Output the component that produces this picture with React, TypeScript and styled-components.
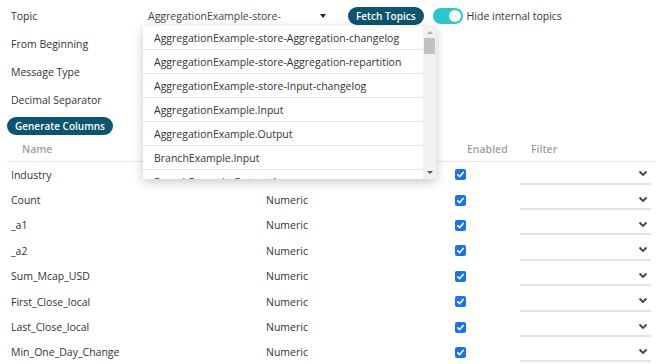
import styled, { createGlobalStyle } from 'styled-components';

const GlobalStyle = createGlobalStyle`
  body {
    margin: 0;
    background: #ffffff;
    font-family: 'Open Sans', 'Noto Sans', sans-serif;
    color: #333333;
  }
`;

const topics = [
  'AggregationExample-store-Aggregation-changelog',
  'AggregationExample-store-Aggregation-repartition',
  'AggregationExample-store-Input-changelog',
  'AggregationExample.Input',
  'AggregationExample.Output',
  'BranchExample.Input',
  'BranchExample.Output-1',
];

// type of the first column sits under the open topic list
const columns = [
  { name: 'Industry', type: '' },
  { name: 'Count', type: 'Numeric' },
  { name: '_a1', type: 'Numeric' },
  { name: '_a2', type: 'Numeric' },
  { name: 'Sum_Mcap_USD', type: 'Numeric' },
  { name: 'First_Close_local', type: 'Numeric' },
  { name: 'Last_Close_local', type: 'Numeric' },
  { name: 'Min_One_Day_Change', type: 'Numeric' },
];

const Page = styled.div`
  width: 663px;
  height: 364px;
  overflow: hidden;
  box-sizing: border-box;
  padding: 2px 8px 0 7px;
  font-size: 10.5px;
`;

const FieldRow = styled.div`
  display: grid;
  grid-template-columns: 135px 1fr;
  align-items: center;
  height: 28px;
`;

const Label = styled.span`
  padding-left: 4px;
  color: #333333;
`;

const Controls = styled.div`
  display: flex;
  align-items: center;
`;

const SelectBox = styled.div`
  position: relative;
  display: flex;
  align-items: center;
  justify-content: space-between;
  width: 190px;
  height: 20px;
  box-sizing: border-box;
  padding: 0 6px;
  color: #444444;
`;

const Caret = styled.span`
  width: 0;
  height: 0;
  border-left: 3.5px solid transparent;
  border-right: 3.5px solid transparent;
  border-top: 4px solid #222222;
`;

const PillButton = styled.button<{ $ml?: number }>`
  margin-left: ${(p) => p.$ml ?? 0}px;
  height: 18px;
  padding: 0 8px;
  border: none;
  border-radius: 9px;
  background: #0d5470;
  color: #ffffff;
  font-family: inherit;
  font-size: 10px;
  font-weight: 600;
  line-height: 18px;
  white-space: nowrap;
`;

const Toggle = styled.span`
  position: relative;
  margin-left: 9px;
  width: 30px;
  height: 16px;
  border-radius: 8px;
  background: #2dc5cd;
  &::after {
    content: '';
    position: absolute;
    right: 2px;
    top: 2px;
    width: 12px;
    height: 12px;
    border-radius: 50%;
    background: #ffffff;
  }
`;

const ToggleLabel = styled.span`
  margin-left: 4px;
`;

const Dropdown = styled.div`
  position: absolute;
  top: 100%;
  left: 1px;
  z-index: 5;
  display: flex;
  width: 293px;
  height: 153px;
  background: #ffffff;
  box-shadow: 0 3px 10px rgba(0, 0, 0, 0.22);
  overflow: hidden;
`;

const OptionList = styled.div`
  flex: 1;
  display: flex;
  flex-direction: column;
`;

const Option = styled.div`
  flex: 0 0 24px;
  display: flex;
  align-items: center;
  box-sizing: border-box;
  padding-left: 11px;
  border-bottom: 1px solid #e4e4e4;
  color: #333333;
  white-space: nowrap;
`;

const ScrollTrack = styled.div`
  display: flex;
  flex-direction: column;
  align-items: center;
  width: 13px;
  background: #f1f1f1;
  padding: 5px 0 5px;
  box-sizing: border-box;
`;

const ArrowUp = styled.span`
  width: 0;
  height: 0;
  border-left: 3px solid transparent;
  border-right: 3px solid transparent;
  border-bottom: 3px solid #a8a8a8;
`;

const ArrowDown = styled.span`
  margin-top: auto;
  width: 0;
  height: 0;
  border-left: 3.5px solid transparent;
  border-right: 3.5px solid transparent;
  border-top: 3.5px solid #505050;
`;

const Thumb = styled.span`
  margin-top: 4px;
  width: 11px;
  height: 16px;
  background: #c1c1c1;
`;

const GenerateRow = styled.div`
  margin-top: 3px;
`;

const Table = styled.div`
  display: flex;
  flex-direction: column;
`;

const TableRow = styled.div<{ $header?: boolean }>`
  display: grid;
  grid-template-columns: 259px 189px 65px 135px;
  align-items: center;
  height: ${(p) => (p.$header ? '24px' : '25.4px')};
  border-bottom: ${(p) => (p.$header ? '1px solid #e6e6e6' : 'none')};
  margin-top: ${(p) => (p.$header ? '2px' : '0')};
`;

const HeaderCell = styled.span<{ $pad: number }>`
  padding-left: ${(p) => p.$pad}px;
  color: #a0a0a0;
  font-weight: 600;
`;

const Cell = styled.span<{ $pad?: number }>`
  padding-left: ${(p) => p.$pad ?? 0}px;
  color: #333333;
  white-space: nowrap;
`;

const Checkbox = styled.span`
  display: flex;
  align-items: center;
  justify-content: center;
  width: 11px;
  height: 11px;
  border-radius: 2px;
  background: #1a73e8;
`;

const FilterSelect = styled.div`
  display: flex;
  align-items: center;
  justify-content: flex-end;
  width: 131px;
  height: 20px;
  box-sizing: border-box;
  padding-right: 3px;
  border-bottom: 2px solid #e2e4e6;
`;

const CheckMark = () => (
  <svg width="9" height="9" viewBox="0 0 9 9">
    <polyline points="1.8,4.8 3.7,6.6 7.2,2.4" fill="none" stroke="#ffffff" strokeWidth="1.6" strokeLinecap="round" strokeLinejoin="round" />
  </svg>
);

const Chevron = () => (
  <svg width="10" height="7" viewBox="0 0 10 7">
    <polyline points="1.5,1.5 5,5 8.5,1.5" fill="none" stroke="#444444" strokeWidth="1.8" />
  </svg>
);

export default function App() {
  return (
    <Page>
      <GlobalStyle />
      <FieldRow>
        <Label>Topic</Label>
        <Controls>
          <SelectBox>
            <span>AggregationExample-store-</span>
            <Caret />
            <Dropdown>
              <OptionList>
                {topics.map((t) => (
                  <Option key={t}>{t}</Option>
                ))}
              </OptionList>
              <ScrollTrack>
                <ArrowUp />
                <Thumb />
                <ArrowDown />
              </ScrollTrack>
            </Dropdown>
          </SelectBox>
          <PillButton $ml={16}>Fetch Topics</PillButton>
          <Toggle />
          <ToggleLabel>Hide internal topics</ToggleLabel>
        </Controls>
      </FieldRow>
      <FieldRow>
        <Label>From Beginning</Label>
      </FieldRow>
      <FieldRow>
        <Label>Message Type</Label>
      </FieldRow>
      <FieldRow>
        <Label>Decimal Separator</Label>
      </FieldRow>
      <GenerateRow>
        <PillButton>Generate Columns</PillButton>
      </GenerateRow>
      <Table>
        <TableRow $header>
          <HeaderCell $pad={15}>Name</HeaderCell>
          <span />
          <HeaderCell $pad={12}>Enabled</HeaderCell>
          <HeaderCell $pad={11}>Filter</HeaderCell>
        </TableRow>
        {columns.map((c) => (
          <TableRow key={c.name}>
            <Cell $pad={4}>{c.name}</Cell>
            <Cell>{c.type}</Cell>
            <Checkbox>
              <CheckMark />
            </Checkbox>
            <FilterSelect>
              <Chevron />
            </FilterSelect>
          </TableRow>
        ))}
      </Table>
    </Page>
  );
}
